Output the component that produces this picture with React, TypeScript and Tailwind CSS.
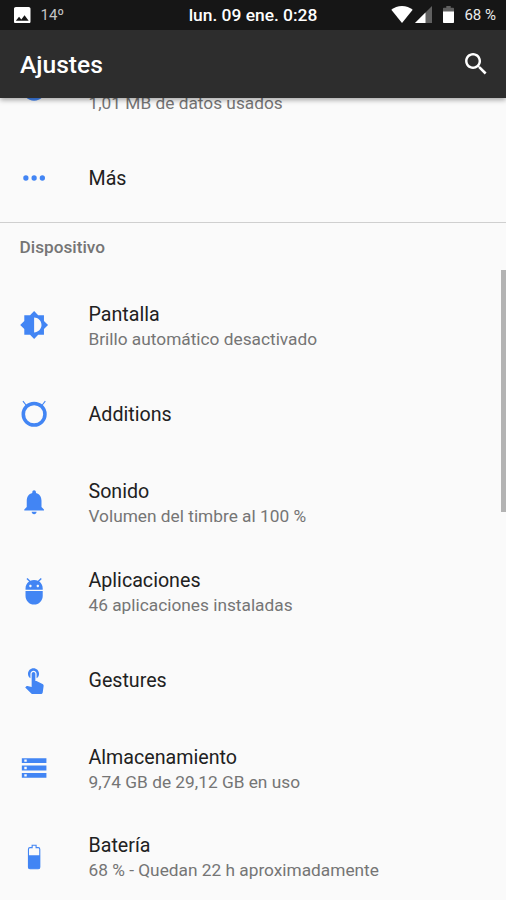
import type { ReactNode } from 'react';

interface IconProps {
  children: ReactNode;
  className?: string;
}

function Icon({ children, className = 'text-[#4285f4]' }: IconProps) {
  return (
    <svg viewBox="-0.3 -0.2 24.4 24.4" className={`w-[30px] h-[30px] shrink-0 ${className}`} fill="currentColor">
      {children}
    </svg>
  );
}

interface SettingItem {
  title: string;
  summary?: string;
  icon: ReactNode;
}

const networkItems: SettingItem[] = [
  {
    title: 'Uso de datos',
    summary: '1,01 MB de datos usados',
    icon: <circle cx="12" cy="12" r="8.2" fill="none" stroke="currentColor" strokeWidth="2.6" />,
  },
  {
    title: 'Más',
    icon: (
      <>
        <circle cx="5.3" cy="12" r="2.15" />
        <circle cx="12" cy="12" r="2.15" />
        <circle cx="18.7" cy="12" r="2.15" />
      </>
    ),
  },
];

const deviceItems: SettingItem[] = [
  {
    title: 'Pantalla',
    summary: 'Brillo automático desactivado',
    icon: (
      <path d="M20 15.31L23.31 12 20 8.69V4h-4.69L12 .69 8.69 4H4v4.69L.69 12 4 15.31V20h4.69L12 23.31 15.31 20H20v-4.69zM12 18V6c3.31 0 6 2.69 6 6s-2.69 6-6 6z" />
    ),
  },
  {
    title: 'Additions',
    icon: (
      <g fill="none" stroke="currentColor">
        <circle cx="12" cy="12.2" r="8.8" strokeWidth="2.9" />
        <path d="M2.9 1.5L5.7 5.1M21.1 1.5L18.3 5.1" strokeWidth="0.9" />
      </g>
    ),
  },
  {
    title: 'Sonido',
    summary: 'Volumen del timbre al 100 %',
    icon: (
      <path d="M12 22c1.1 0 2-.9 2-2h-4c0 1.1.9 2 2 2zm6-6v-5c0-3.07-1.64-5.64-4.5-6.32V4c0-.83-.67-1.5-1.5-1.5s-1.5.67-1.5 1.5v.68C7.63 5.36 6 7.92 6 11v5l-2 2v1h16v-1l-2-2z" />
    ),
  },
  {
    title: 'Aplicaciones',
    summary: '46 aplicaciones instaladas',
    icon: (
      <path d="M5 16c0 3.87 3.13 7 7 7s7-3.13 7-7v-4H5v4zM16.12 4.37l2.1-2.1-.82-.83-2.3 2.31C14.16 3.28 13.12 3 12 3s-2.16.28-3.09.75L6.6 1.44l-.82.83 2.1 2.1C6.14 5.64 5 7.68 5 10v1h14v-1c0-2.32-1.14-4.36-2.88-5.63zM9 9c-.55 0-1-.45-1-1s.45-1 1-1 1 .45 1 1-.45 1-1 1zm6 0c-.55 0-1-.45-1-1s.45-1 1-1 1 .45 1 1-.45 1-1 1z" />
    ),
  },
  {
    title: 'Gestures',
    icon: (
      <path
        transform="translate(0 -0.6)"
        d="M9 11.24V7.5C9 6.12 10.12 5 11.5 5S14 6.12 14 7.5v3.74c1.21-.81 2-2.18 2-3.74C16 5.01 13.99 3 11.5 3S7 5.01 7 7.5c0 1.56.79 2.93 2 3.74zm9.84 4.63l-4.54-2.26c-.17-.07-.35-.11-.54-.11H13v-6c0-.83-.67-1.5-1.5-1.5S10 6.67 10 7.5v10.74l-3.43-.72c-.08-.01-.15-.03-.24-.03-.31 0-.59.13-.79.33l-.79.8 4.94 4.94c.27.27.65.44 1.06.44h6.79c.75 0 1.33-.55 1.44-1.28l.75-5.27c.01-.07.02-.14.02-.2 0-.62-.38-1.16-.91-1.38z"
      />
    ),
  },
  {
    title: 'Almacenamiento',
    summary: '9,74 GB de 29,12 GB en uso',
    icon: (
      <path d="M2 20h20v-4H2v4zm2-3h2v2H4v-2zM2 4v4h20V4H2zm4 3H4V5h2v2zm-4 7h20v-4H2v4zm2-3h2v2H4v-2z" />
    ),
  },
  {
    title: 'Batería',
    summary: '68 % - Quedan 22 h aproximadamente',
    icon: (
      <>
        <path
          d="M7.4 20.4V5.6c0-.7.5-1.2 1.2-1.2h1.8v-2h3.2v2h1.8c.7 0 1.2.5 1.2 1.2v14.8c0 .7-.5 1.2-1.2 1.2H8.6c-.7 0-1.2-.5-1.2-1.2z"
          fill="none"
          stroke="currentColor"
          strokeWidth="0.9"
        />
        <path d="M7.2 10.5h9.6v9.9c0 .7-.5 1.2-1.2 1.2H8.4c-.7 0-1.2-.5-1.2-1.2z" />
      </>
    ),
  },
];

function SettingRow({ title, summary, icon }: SettingItem) {
  return (
    <li className="flex items-center h-[88.6px] pl-[19px] shrink-0">
      <Icon>{icon}</Icon>
      <div className={`ml-[39.5px] flex flex-col ${summary ? 'pt-[3px]' : 'pt-[2px]'}`}>
        <span className="text-[19.65px] leading-[25px] text-[#212121]">{title}</span>
        {summary && <span className="text-[17.3px] leading-[25px] text-[#757575]">{summary}</span>}
      </div>
    </li>
  );
}

function StatusBar() {
  return (
    <div className="grid grid-cols-[1fr_auto_1fr] items-center h-[29.5px] bg-[#161616] text-white">
      <div className="flex items-center pl-[14px]">
        <svg viewBox="3 3 18 18" className="w-[16.5px] h-[16.5px]" fill="currentColor">
          <path d="M21 19V5c0-1.1-.9-2-2-2H5c-1.1 0-2 .9-2 2v14c0 1.1.9 2 2 2h14c1.1 0 2-.9 2-2zM8.5 13.5l2.5 3.01L14.5 12l4.5 6H5l3.5-4.5z" />
        </svg>
        <span className="ml-[10px] text-[15px] leading-none pt-[2px] text-[#c4c4c4]">14º</span>
      </div>
      <span className="text-[17.4px] font-medium leading-none pt-[2px]">lun. 09 ene. 0:28</span>
      <div className="flex items-center justify-end pr-[10px]">
        <svg viewBox="0 0 22 17" className="w-[22px] h-[17px]" fill="currentColor">
          <path d="M0.3 3.8C3.2 1.4 6.9 0 11 0s7.8 1.4 10.7 3.8L11 17z" />
        </svg>
        <svg viewBox="0 0 17 17" className="ml-[2px] w-[17px] h-[17px]" fill="currentColor">
          <path d="M17 0v17H0z" fill="#606060" />
          <path d="M10.5 6.5V17H0z" />
        </svg>
        <svg viewBox="0 0 11 17" className="ml-[11px] w-[11px] h-[17px]" fill="currentColor">
          <path d="M3.3 0h4.4v1.7H10c.6 0 1 .4 1 1V6H0V2.7c0-.6.4-1 1-1h2.3z" fill="#606060" />
          <path d="M0 5.5h11V16c0 .6-.4 1-1 1H1c-.6 0-1-.4-1-1z" />
        </svg>
        <span className="ml-[10.5px] text-[15px] leading-none pt-[2px] text-[#ececec]">68 %</span>
      </div>
    </div>
  );
}

export default function App() {
  return (
    <div className="w-[506px] h-[900px] flex flex-col overflow-hidden bg-[#fafafa] font-[Roboto,sans-serif]">
      <header className="relative z-10 shrink-0 shadow-[0_2px_5px_rgba(0,0,0,0.35)]">
        <StatusBar />
        <div className="flex items-center justify-between h-[68.5px] pl-[20px] pr-[15px] bg-[#2d2d2d] text-white">
          <h1 className="text-[24.6px] font-medium leading-none pt-[4px]">Ajustes</h1>
          <Icon className="text-white">
            <path d="M15.5 14h-.79l-.28-.27C15.41 12.59 16 11.11 16 9.5 16 5.91 13.09 3 9.5 3S3 5.91 3 9.5 5.91 16 9.5 16c1.61 0 3.09-.59 4.23-1.57l.27.28v.79l5 4.99L20.49 19l-4.99-5zm-6 0C7.01 14 5 11.99 5 9.5S7.01 5 9.5 5 14 7.01 14 9.5 11.99 14 9.5 14z" />
          </Icon>
        </div>
      </header>

      {/* List is scrolled part way under the toolbar */}
      <main className="relative -mt-[53px]">
        <ul className="h-[178px] border-b border-[#cfcfcf]">
          {networkItems.map((item) => (
            <SettingRow key={item.title} {...item} />
          ))}
        </ul>
        <h2 className="h-[58px] pl-[19.6px] pt-[12px] text-[17.2px] leading-[25px] font-medium text-[#757575]">
          Dispositivo
        </h2>
        <ul>
          {deviceItems.map((item) => (
            <SettingRow key={item.title} {...item} />
          ))}
        </ul>
        <div className="absolute right-0 top-[225px] w-[5px] h-[242px] bg-[#b3b3b3]" />
      </main>
    </div>
  );
}
